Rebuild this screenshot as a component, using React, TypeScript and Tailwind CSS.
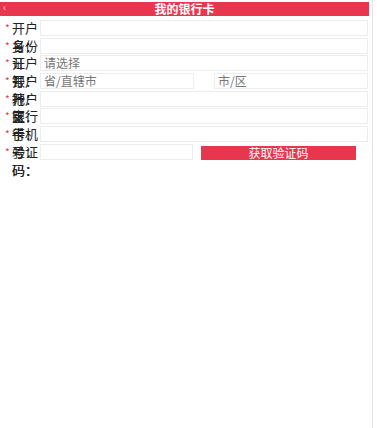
import React from "react";

const font = { fontFamily: '"Noto Sans CJK SC", "Noto Sans", sans-serif' };

type Row = { label: string; kind: "text" | "select" | "region" | "code"; placeholder?: string };

const ROWS: Row[] = [
  { label: "开户名：", kind: "text" },
  { label: "身份证号：", kind: "text" },
  { label: "开户银行：", kind: "select", placeholder: "请选择" },
  { label: "开户地区：", kind: "region" },
  { label: "开户支行：", kind: "text" },
  { label: "银行卡号：", kind: "text" },
  { label: "手机号码：", kind: "text" },
  { label: "验证码：", kind: "code" },
];

function Field({ row }: { row: Row }) {
  if (row.kind === "region") {
    return (
      <div className="flex flex-1 gap-[20px]">
        <div className="h-[16px] flex-1 border border-[#ececec] bg-white px-[3px] text-[12px] leading-[14px] text-[#777]">省/直辖市</div>
        <div className="h-[16px] flex-1 border border-[#ececec] bg-white px-[3px] text-[12px] leading-[14px] text-[#777]">市/区</div>
      </div>
    );
  }
  if (row.kind === "code") {
    return (
      <div className="flex flex-1 items-start gap-[8px]">
        <div className="h-[16px] w-[153px] border border-[#ececec] bg-white" />
        <button className="mt-[2px] h-[14px] w-[155px] bg-[#e8364e] text-[12px] leading-[14px] text-white">获取验证码</button>
      </div>
    );
  }
  return (
    <div className="h-[16px] flex-1 border border-[#ececec] bg-white px-[3px] text-[12px] leading-[14px] text-[#777]">
      {row.placeholder}
    </div>
  );
}

export default function App() {
  return (
    <div className="h-[428px] w-[377px] bg-white" style={font}>
      <div className="h-full w-[373px] border-r border-[#e2e2e2] pt-[2px]">
        {/* Header */}
        <div className="relative mr-[3px] flex h-[14px] items-center justify-center bg-[#e8364e]">
          <span className="absolute left-[3px] top-[-2px] text-[10px] leading-[14px] text-white/80">‹</span>
          <h1 className="text-[12px] font-bold leading-[14px] text-white">我的银行卡</h1>
        </div>

        {/* Form */}
        <div className="pt-[3px] pr-[4px]">
          {ROWS.map((row, i) => (
            <div key={i} className="flex h-[17.7px] items-start">
              <span className="w-[12px] pl-[5px] text-[10px] leading-[17px] text-[#e8364e]">*</span>
              <span className="w-[27px] break-all text-[13px] leading-[17.7px] text-[#222]">{row.label}</span>
              <div className="flex flex-1 pl-[1px] pt-[1px]">
                <Field row={row} />
              </div>
            </div>
          ))}
        </div>
      </div>
    </div>
  );
}
